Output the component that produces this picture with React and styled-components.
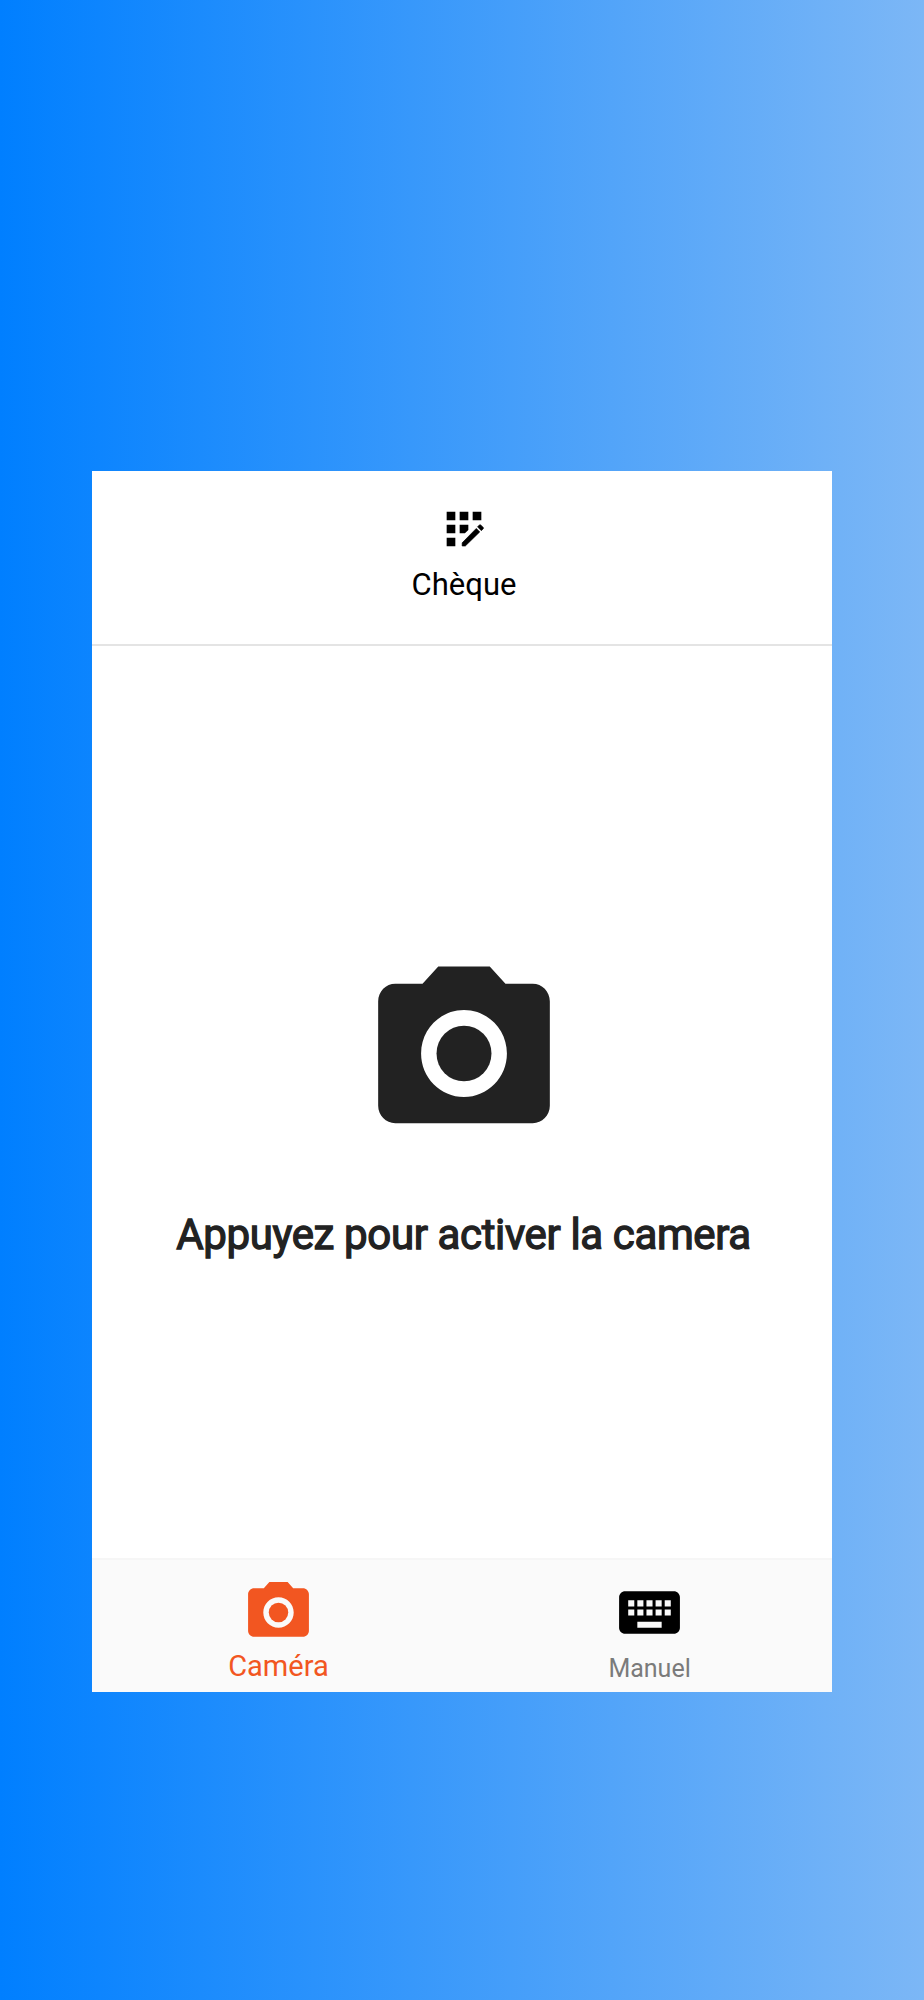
import React from 'react';
import styled, { createGlobalStyle } from 'styled-components';
import { MdKeyboard, MdPhotoCamera } from 'react-icons/md';

const GlobalStyles = createGlobalStyle`
  * {
    box-sizing: border-box;
    margin: 0;
    padding: 0;
  }
  body {
    font-family: Roboto, sans-serif;
  }
`;

const PageStyles = styled.div`
  height: 2000px;
  padding: 471px 10% 0;
  background: linear-gradient(90deg, #007fff 0%, #7cb7f6 100%);
`;

const Panel = styled.main`
  display: flex;
  flex-direction: column;
  height: 1221px;
  background-color: #fff;
`;

const Header = styled.header`
  display: flex;
  flex-direction: column;
  align-items: center;
  height: 175px;
  padding: 32px 0 0 4px;
  border-bottom: 2px solid #e4e4e4;
  font-size: 31px;
  line-height: 36px;
  color: #000;
  svg {
    width: 52px;
    height: 52px;
    margin-bottom: 12px;
  }
`;

const CameraPrompt = styled.button`
  flex: 1;
  display: flex;
  flex-direction: column;
  align-items: center;
  padding: 303px 0 0 3px;
  border: none;
  background: none;
  color: #222;
  font-family: inherit;
  svg {
    width: 206px;
    height: 209px;
  }
`;

const PromptText = styled.span`
  margin-top: 52px;
  font-size: 42px;
  line-height: 50px;
  letter-spacing: -0.37px;
  white-space: nowrap;
  -webkit-text-stroke: 1.3px #222;
`;

const TabBar = styled.nav`
  display: flex;
  height: 134px;
  border-top: 2px solid #f6f6f6;
  background-color: #fafafa;
`;

const Tab = styled.div`
  flex: 1;
  display: flex;
  flex-direction: column;
  align-items: center;
  padding: 16px 0 0 ${({ $shift }) => $shift};
  color: ${({ $active }) => ($active ? '#f25621' : '#000')};
  svg {
    width: 73px;
    height: 73px;
  }
`;

const TabLabel = styled.span`
  margin-top: ${({ $active }) => ($active ? '-1px' : '2px')};
  font-size: ${({ $active }) => ($active ? '29px' : '25px')};
  line-height: 36px;
  color: ${({ $active }) => ($active ? '#f25621' : '#7b7b7b')};
`;

// grid of squares with a pencil over the corner
const ChequeIcon = () => (
  <svg viewBox="0 0 24 24" fill="currentColor">
    <path d="M10 4h4v4h-4zM4 16h4v4H4zM4 10h4v4H4zM4 4h4v4H4zM16 4h4v4h-4zM14 12.42V10h-4v4h2.42z" />
    <path
      d="M20.88 11.29l-1.17-1.17c-.16-.16-.42-.16-.58 0L18.25 11 20 12.75l.88-.88c.16-.16.16-.42 0-.58zM11.15 18.4v1.45h1.45l6.67-6.52-1.6-1.6z"
      stroke="currentColor"
      strokeWidth="0.3"
      strokeLinejoin="round"
    />
  </svg>
);

export default function App() {
  return (
    <>
      <GlobalStyles />
      <PageStyles>
        <Panel>
          <Header>
            <ChequeIcon />
            <span>Chèque</span>
          </Header>
          <CameraPrompt>
            <MdPhotoCamera preserveAspectRatio="none" />
            <PromptText>Appuyez pour activer la camera</PromptText>
          </CameraPrompt>
          <TabBar>
            <Tab $active $shift="4px">
              <MdPhotoCamera />
              <TabLabel $active>Caméra</TabLabel>
            </Tab>
            <Tab $shift="7px">
              <MdKeyboard />
              <TabLabel>Manuel</TabLabel>
            </Tab>
          </TabBar>
        </Panel>
      </PageStyles>
    </>
  );
}
